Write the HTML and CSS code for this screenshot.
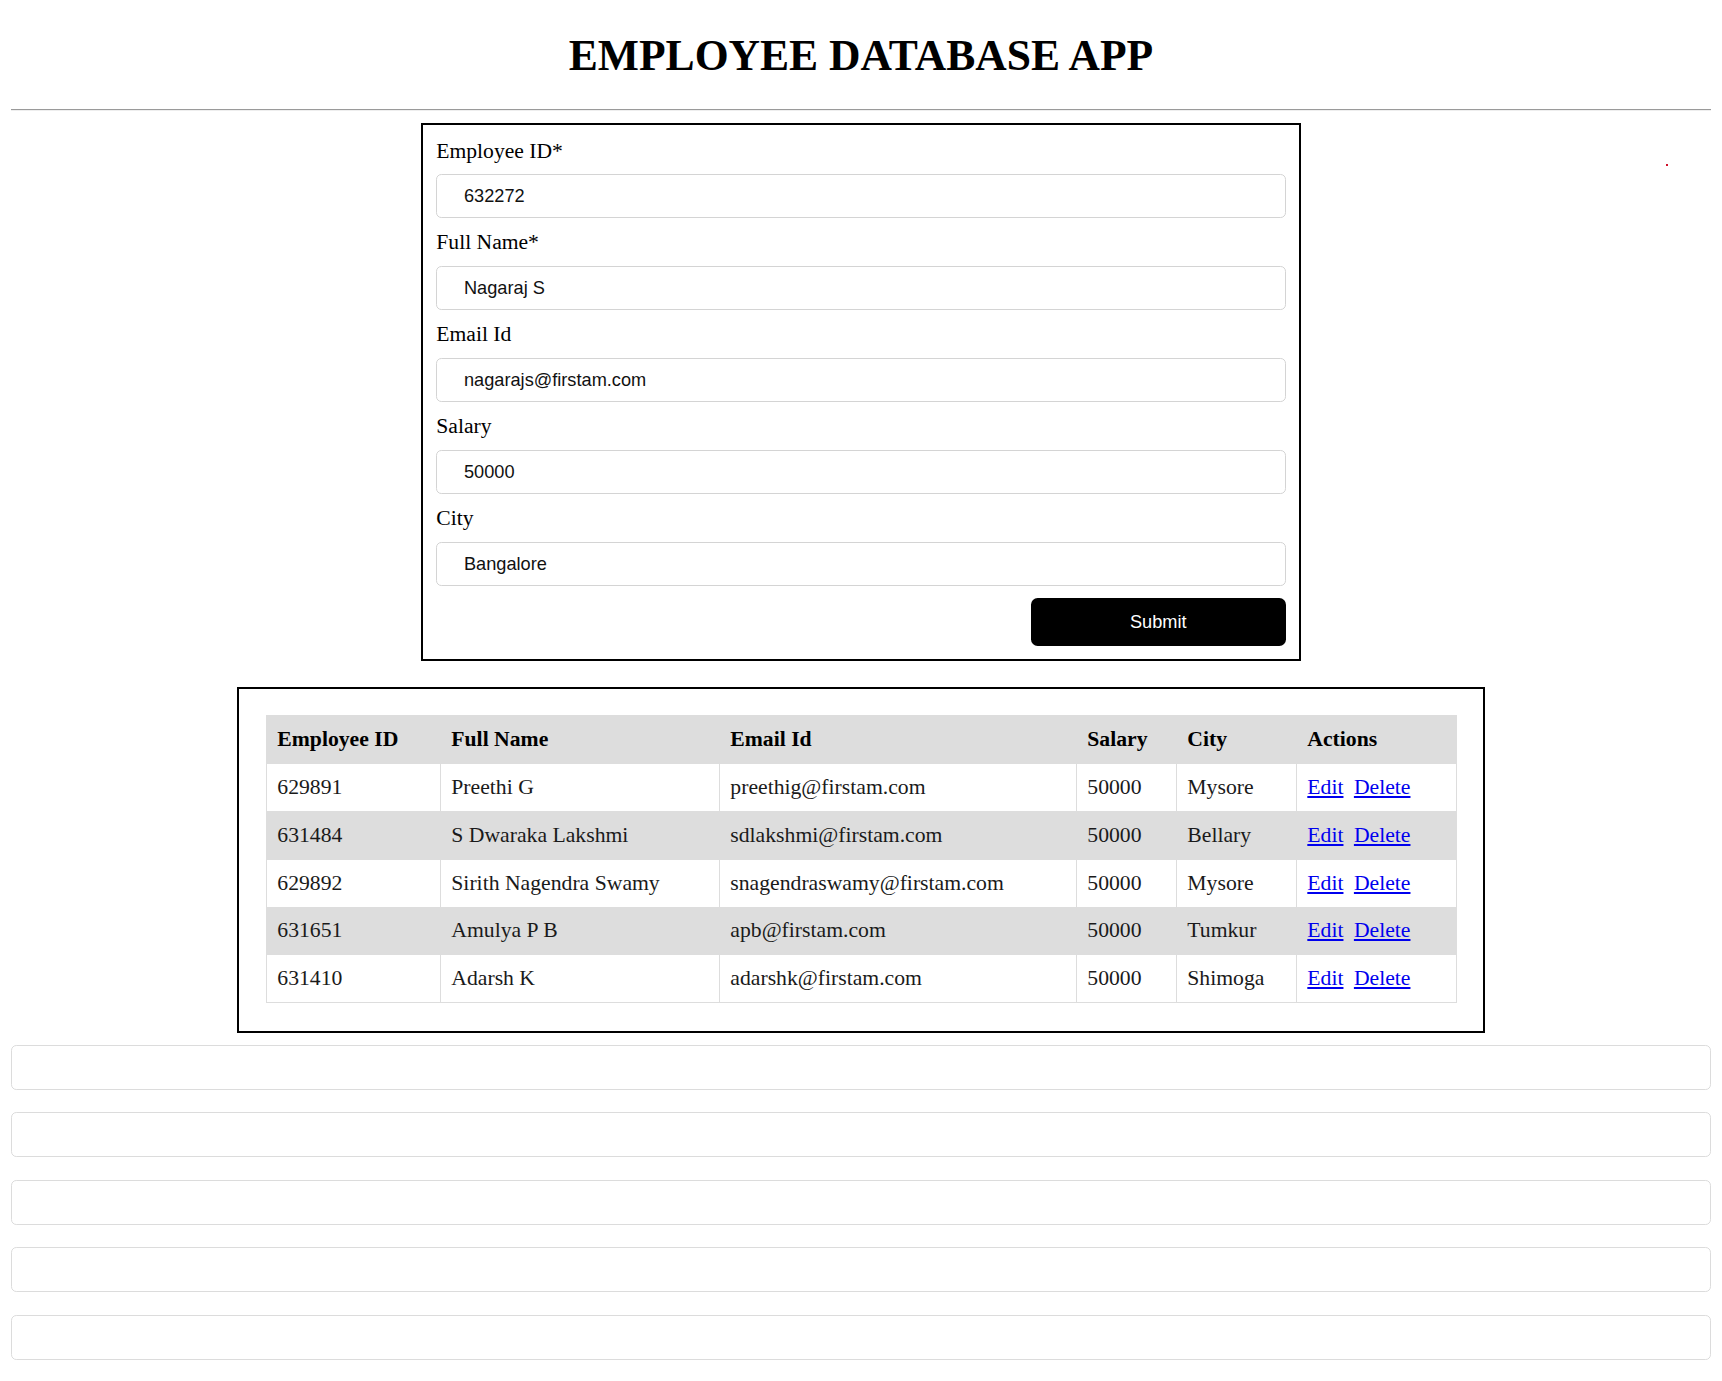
FILE: index.html
```html
<!DOCTYPE html>
<html lang="en">
<head>
<meta charset="utf-8">
<title>Employee Database App</title>
<link rel="stylesheet" href="styles.css">
</head>
<body>
  <h1 class="title">EMPLOYEE DATABASE APP</h1>
  <hr class="rule">
  <span class="error-dot"></span>
  <form class="form-card">
    <div class="field">
      <label class="field-label">Employee ID*</label>
      <input class="field-input" type="text" value="632272">
    </div>
    <div class="field">
      <label class="field-label">Full Name*</label>
      <input class="field-input" type="text" value="Nagaraj S">
    </div>
    <div class="field">
      <label class="field-label">Email Id</label>
      <input class="field-input" type="text" value="nagarajs@firstam.com">
    </div>
    <div class="field">
      <label class="field-label">Salary</label>
      <input class="field-input" type="text" value="50000">
    </div>
    <div class="field">
      <label class="field-label">City</label>
      <input class="field-input" type="text" value="Bangalore">
    </div>
    <div class="actions-row">
      <button class="submit-btn" type="button">Submit</button>
    </div>
  </form>

  <div class="table-card">
    <table class="emp-table">
      <colgroup>
        <col class="c-id"><col class="c-name"><col class="c-email"><col class="c-salary"><col class="c-city"><col class="c-actions">
      </colgroup>
      <thead>
        <tr><th>Employee ID</th><th>Full Name</th><th>Email Id</th><th>Salary</th><th>City</th><th>Actions</th></tr>
      </thead>
      <tbody>
        <tr><td>629891</td><td>Preethi G</td><td>preethig@firstam.com</td><td>50000</td><td>Mysore</td><td><a class="act" href="#">Edit</a> <a class="act" href="#">Delete</a></td></tr>
        <tr><td>631484</td><td>S Dwaraka Lakshmi</td><td>sdlakshmi@firstam.com</td><td>50000</td><td>Bellary</td><td><a class="act" href="#">Edit</a> <a class="act" href="#">Delete</a></td></tr>
        <tr><td>629892</td><td>Sirith Nagendra Swamy</td><td>snagendraswamy@firstam.com</td><td>50000</td><td>Mysore</td><td><a class="act" href="#">Edit</a> <a class="act" href="#">Delete</a></td></tr>
        <tr><td>631651</td><td>Amulya P B</td><td>apb@firstam.com</td><td>50000</td><td>Tumkur</td><td><a class="act" href="#">Edit</a> <a class="act" href="#">Delete</a></td></tr>
        <tr><td>631410</td><td>Adarsh K</td><td>adarshk@firstam.com</td><td>50000</td><td>Shimoga</td><td><a class="act" href="#">Edit</a> <a class="act" href="#">Delete</a></td></tr>
      </tbody>
    </table>
  </div>

  <div class="extra-inputs">
    <input class="blank-input" type="text">
    <input class="blank-input" type="text">
    <input class="blank-input" type="text">
    <input class="blank-input" type="text">
    <input class="blank-input" type="text">
  </div>
</body>
</html>
```
FILE: styles.css
```css
html, body {
  background: #ffffff;
}
body {
  margin: 0;
  padding: 0 10.67px;
  font-family: "Liberation Serif", "Times New Roman", serif;
  font-size: 21.33px;
  color: #000;
  position: relative;
}
.title {
  margin: 30px 0 28.5px;
  font-size: 43.6px;
  line-height: 50px;
  font-weight: bold;
  text-align: center;
}
.rule {
  margin: 0 0 12px;
  height: 0;
  border: 0;
  border-top: 1.33px solid #9a9a9a;
  border-bottom: 1.33px solid #eeeeee;
}
.error-dot {
  position: absolute;
  left: 1666px;
  top: 164px;
  width: 2px;
  height: 2px;
  background: #d0102a;
}
.form-card {
  width: 880px;
  box-sizing: border-box;
  margin: 0 auto;
  border: 2.67px solid #000;
  padding: 14px 13.33px 13px;
}
.field-label {
  display: block;
  font-size: 21.6px;
  line-height: 24.5px;
  margin-bottom: 11.3px;
}
.field-input {
  display: block;
  width: 100%;
  height: 44px;
  box-sizing: border-box;
  margin: 0 0 12.2px;
  padding: 0 26.67px;
  border: 1.33px solid #d4d4d4;
  border-radius: 5.33px;
  font-family: "Liberation Sans", Arial, sans-serif;
  font-size: 18.2px;
  color: #111;
  background: #fff;
}
.actions-row {
  display: flex;
  justify-content: flex-end;
}
.submit-btn {
  width: 30%;
  height: 47.7px;
  border: 0;
  border-radius: 6.67px;
  background: #000;
  color: #fff;
  font-family: "Liberation Sans", Arial, sans-serif;
  font-size: 18.2px;
}
.table-card {
  width: 1248px;
  box-sizing: border-box;
  margin: 25.67px auto 0;
  border: 2.67px solid #000;
  padding: 26.67px 26.67px 27.5px;
}
.emp-table {
  width: 100%;
  border-collapse: collapse;
  table-layout: fixed;
  font-size: 21.7px;
}
.c-id { width: 174px; }
.c-name { width: 279px; }
.c-email { width: 357px; }
.c-salary { width: 100px; }
.c-city { width: 120px; }
.c-actions { width: 160px; }
.emp-table th,
.emp-table td {
  border: 1.33px solid #dddddd;
  text-align: left;
  padding: 10.67px;
  line-height: 25.5px;
  white-space: nowrap;
}
.emp-table th {
  font-weight: bold;
  background: #dddddd;
}
.emp-table tbody tr:nth-child(even) {
  background: #dddddd;
}
.emp-table td {
  color: #1a1a1a;
}
.act {
  color: #0000ee;
  text-decoration: underline;
}
.act:first-child {
  margin-right: 5px;
}
.extra-inputs {
  display: flex;
  flex-direction: column;
  gap: 22.5px;
  margin-top: 12px;
}
.blank-input {
  display: block;
  width: 100%;
  height: 45px;
  box-sizing: border-box;
  margin: 0;
  border: 1.33px solid #dcdcdc;
  border-radius: 5.33px;
  background: #fff;
}
```
